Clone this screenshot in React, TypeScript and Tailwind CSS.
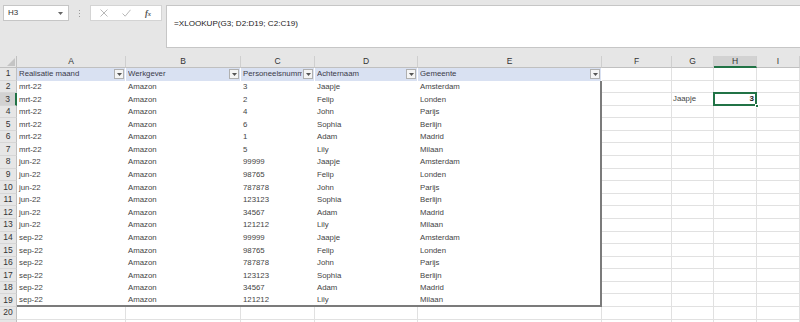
import React from "react";

const font = { fontFamily: '"Liberation Sans", Arial, sans-serif' };

type Col = { k: string; w: string };
const cols: Col[] = [
  { k: "A", w: "w-[109px]" },
  { k: "B", w: "w-[115px]" },
  { k: "C", w: "w-[74px]" },
  { k: "D", w: "w-[103px]" },
  { k: "E", w: "w-[184px]" },
  { k: "F", w: "w-[70px]" },
  { k: "G", w: "w-[42px]" },
  { k: "H", w: "w-[43px]" },
  { k: "I", w: "flex-1" },
];

const headers = ["Realisatie maand", "Werkgever", "Personeelsnummer", "Achternaam", "Gemeente"];
const names = ["Jaapje", "Felip", "John", "Sophia", "Adam", "Lily"];
const cities = ["Amsterdam", "Londen", "Parijs", "Berlijn", "Madrid", "Milaan"];
const groups: { m: string; nums: string[] }[] = [
  { m: "mrt-22", nums: ["3", "2", "4", "6", "1", "5"] },
  { m: "jun-22", nums: ["99999", "98765", "787878", "123123", "34567", "121212"] },
  { m: "sep-22", nums: ["99999", "98765", "787878", "123123", "34567", "121212"] },
];
const data: string[][] = [];
groups.forEach((g) => g.nums.forEach((n, i) => data.push([g.m, "Amazon", n, names[i], cities[i]])));

function Dropdown() {
  return (
    <div className="w-[10px] h-[10px] shrink-0 border border-[#b0b0b0] bg-[#f5f5f5] flex items-center justify-center">
      <svg width="5" height="3" viewBox="0 0 5 3">
        <path d="M0 0 L5 0 L2.5 3 Z" fill="#555" />
      </svg>
    </div>
  );
}

function RowHeader({ n, sel, hide }: { n: number; sel?: boolean; hide?: boolean }) {
  return (
    <div
      className={
        "w-[17px] shrink-0 flex items-center justify-center text-[8.5px] text-[#333] border-b border-[#d6d6d6] " +
        (sel ? "bg-[#d2d2d2] border-r-2 border-r-[#217346]" : "bg-[#e6e6e6] border-r border-r-[#c0c0c0]")
      }
    >
      {hide ? null : n}
    </div>
  );
}

const grid = "border-r border-b border-[#e1e1e1] bg-white";
const tableBorder = "border-[#7b7b7b]";

export default function App() {
  return (
    <div className="w-[800px] h-[322px] overflow-hidden bg-[#e6e6e6] flex flex-col" style={font}>
      {/* toolbar */}
      <div className="h-[56px] shrink-0 flex items-start pt-[5px]">
        <div className="ml-[3px] w-[66px] h-[16px] bg-white border border-[#c6c6c6] flex items-center justify-between pl-[4px] pr-[5px]">
          <span className="text-[8px] text-[#333]">H3</span>
          <svg width="5" height="3" viewBox="0 0 5 3">
            <path d="M0 0 L5 0 L2.5 3 Z" fill="#666" />
          </svg>
        </div>
        <div className="w-[21px] h-[16px] flex flex-col items-center justify-center gap-[2px]">
          <div className="w-[1px] h-[1px] bg-[#9a9a9a]" />
          <div className="w-[1px] h-[1px] bg-[#9a9a9a]" />
          <div className="w-[1px] h-[1px] bg-[#9a9a9a]" />
        </div>
        <div className="w-[72px] h-[16px] bg-white border border-[#d4d4d4] flex items-center">
          <div className="w-[26px] flex justify-center">
            <svg width="8" height="8" viewBox="0 0 8 8">
              <path d="M0.5 0.5 L7.5 7.5 M7.5 0.5 L0.5 7.5" stroke="#b0b0b0" strokeWidth="0.9" />
            </svg>
          </div>
          <div className="w-[18px] flex justify-center">
            <svg width="9" height="8" viewBox="0 0 9 8">
              <path d="M0.5 4.5 L3.2 7.2 L8.5 0.8" stroke="#b0b0b0" strokeWidth="0.9" fill="none" />
            </svg>
          </div>
          <div className="flex-1 flex justify-center">
            <span
              className="text-[8.5px] italic text-[#555] font-bold"
              style={{ fontFamily: '"Liberation Serif", "Times New Roman", serif' }}
            >
              f<span className="text-[6.5px]">x</span>
            </span>
          </div>
        </div>
        <div className="ml-[4px] flex-1 h-[43px] bg-white border border-[#c6c6c6] border-r-0 pl-[7px] pt-[3px]">
          <span className="text-[8.1px] text-[#222]">=XLOOKUP(G3; D2:D19; C2:C19)</span>
        </div>
      </div>

      {/* column header row */}
      <div className="h-[12px] shrink-0 flex">
        <div className="w-[17px] shrink-0 bg-[#e6e6e6] border-r border-b border-[#c0c0c0] relative">
          <svg className="absolute right-[1px] bottom-[1px]" width="8" height="8" viewBox="0 0 8 8">
            <path d="M8 0 L8 8 L0 8 Z" fill="#c4c4c4" />
          </svg>
        </div>
        {cols.map((c) => (
          <div
            key={c.k}
            className={
              c.w +
              " shrink-0 flex items-center justify-center text-[8.5px] text-[#333] border-r border-r-[#cfcfcf] " +
              (c.k === "H" ? "bg-[#d2d2d2] border-b-2 border-b-[#217346]" : "bg-[#e6e6e6] border-b border-b-[#c0c0c0]")
            }
          >
            {c.k}
          </div>
        ))}
      </div>

      {/* row 1 */}
      <div className="h-[12.58px] shrink-0 flex text-[7.8px] text-[#3a3a48]">
        <RowHeader n={1} />
        {cols.map((c, i) =>
          i < 5 ? (
            <div
              key={c.k}
              className={c.w + " shrink-0 bg-[#d9e1f2] border-r border-white flex items-center pl-[2px] pr-[1px] gap-[1px]"}
            >
              <span className="flex-1 min-w-0 overflow-hidden whitespace-nowrap">{headers[i]}</span>
              <Dropdown />
            </div>
          ) : (
            <div key={c.k} className={c.w + " shrink-0 " + grid} />
          )
        )}
      </div>

      {/* data rows 2-19 */}
      {data.map((r, ri) => {
        const rowNum = ri + 2;
        const last = ri === data.length - 1;
        return (
          <div key={rowNum} className="h-[12.58px] shrink-0 flex text-[7.8px] text-[#444]">
            <RowHeader n={rowNum} sel={rowNum === 3} />
            {cols.map((c, i) => {
              if (i < 5) {
                const cls =
                  c.w +
                  " shrink-0 bg-white flex items-center pl-[2px] overflow-hidden whitespace-nowrap " +
                  tableBorder +
                  (i === 4 ? " border-r-2" : "") +
                  (last ? " border-b-2" : "");
                return (
                  <div key={c.k} className={cls}>
                    {r[i]}
                  </div>
                );
              }
              if (rowNum === 3 && c.k === "G") {
                return (
                  <div key={c.k} className={c.w + " shrink-0 flex items-center pl-[1px] whitespace-nowrap " + grid}>
                    Jaapje
                  </div>
                );
              }
              if (rowNum === 3 && c.k === "H") {
                return (
                  <div key={c.k} className={c.w + " shrink-0 relative " + grid}>
                    <div className="absolute -left-[1px] -top-[1px] w-[44px] h-[13.6px] border-2 border-[#217346] flex items-center justify-end pr-[1px] text-[8px] text-[#222] font-bold">
                      3
                    </div>
                    <div className="absolute -right-[3px] -bottom-[3px] w-[4px] h-[4px] bg-[#217346] border border-white" />
                  </div>
                );
              }
              return <div key={c.k} className={c.w + " shrink-0 " + grid} />;
            })}
          </div>
        );
      })}

      {/* rows 20-21 */}
      {[20, 21].map((n) => (
        <div key={n} className="h-[12.58px] shrink-0 flex">
          <RowHeader n={n} hide={n === 21} />
          {cols.map((c) => (
            <div key={c.k} className={c.w + " shrink-0 " + grid} />
          ))}
        </div>
      ))}
    </div>
  );
}
